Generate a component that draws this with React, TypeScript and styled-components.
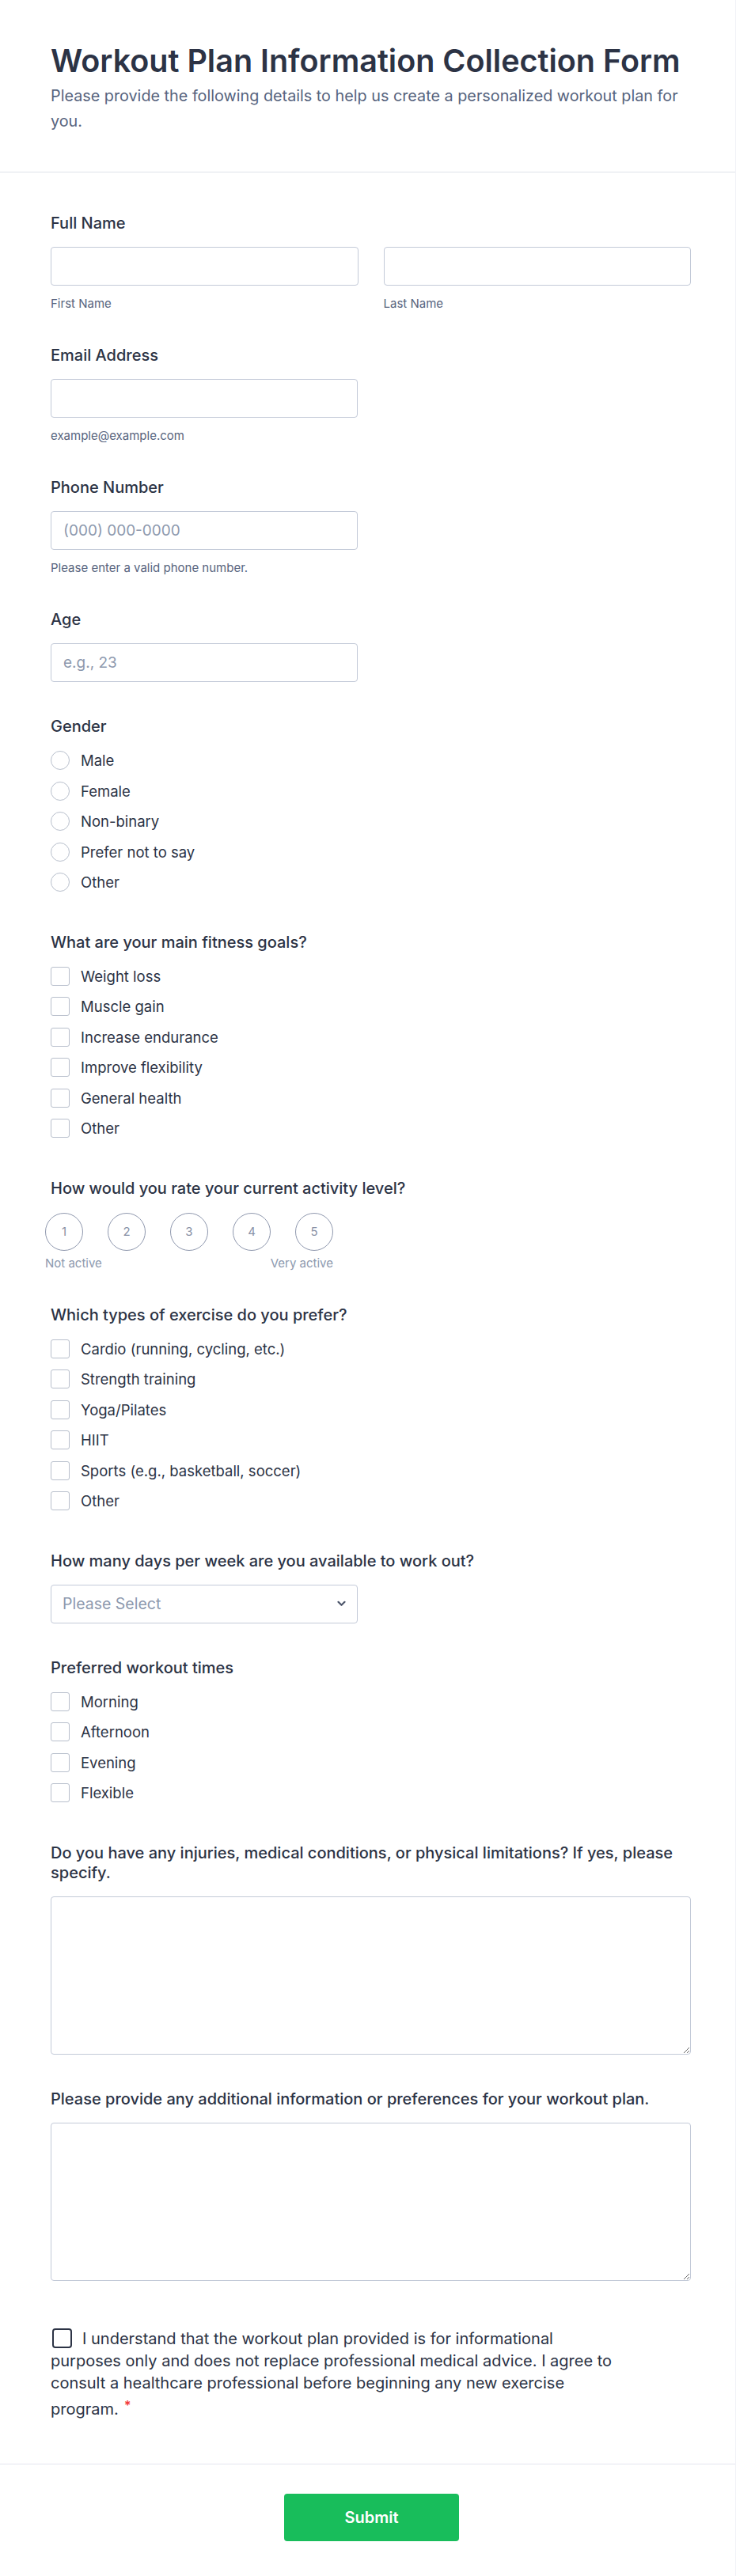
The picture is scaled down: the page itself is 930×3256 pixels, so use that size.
import React from "react";
import styled, { createGlobalStyle } from "styled-components";

const GlobalStyle = createGlobalStyle`
  * { box-sizing: border-box; }
  body {
    margin: 0;
    background: #ffffff;
    font-family: Inter, "Noto Sans", "Liberation Sans", sans-serif;
    color: #2c3345;
  }
`;

const Page = styled.div`
  width: 930px;
  background: #ffffff;
  border-right: 1px solid #f1f2f7;
`;

const Header = styled.header`
  padding: 53px 56px 48px 64px;
  border-bottom: 1px solid #dfe2ea;
`;

const Title = styled.h1`
  margin: 0;
  font-size: 39.5px;
  line-height: 48px;
  font-weight: 600;
  color: #2c3345;
`;

const Subtitle = styled.p`
  margin: 4px 0 0;
  font-size: 19.8px;
  line-height: 32px;
  color: #57647e;
`;

const Form = styled.form`
  display: flex;
  flex-direction: column;
  gap: 44px;
  padding: 52px 56px 55px 64px;
`;

const Field = styled.div`
  display: flex;
  flex-direction: column;
`;

const Label = styled.label`
  display: block;
  font-size: 20px;
  line-height: 25px;
  font-weight: 500;
  color: #2c3345;
  margin-bottom: 17px;
`;

const Row = styled.div`
  display: grid;
  grid-template-columns: 1fr 1fr;
  gap: 32px;
`;

const Column = styled.div`
  display: flex;
  flex-direction: column;
`;

const TextInput = styled.input<{ $narrow?: boolean }>`
  width: ${(p) => (p.$narrow ? "388px" : "100%")};
  height: 49px;
  padding: 0 15px;
  border: 1px solid #c3cad8;
  border-radius: 4px;
  font-family: inherit;
  font-size: 19px;
  color: #2c3345;
  background: #ffffff;
  outline: none;
  &::placeholder {
    color: #8d99ae;
  }
`;

const SubLabel = styled.span`
  margin-top: 14px;
  font-size: 15px;
  line-height: 18px;
  color: #57647e;
`;

const OptionList = styled.div`
  display: flex;
  flex-direction: column;
  margin-top: -6px;
`;

const Option = styled.label`
  display: flex;
  align-items: center;
  gap: 14px;
  height: 38.5px;
  font-size: 18.5px;
  color: #2c3345;
`;

const Radio = styled.input.attrs({ type: "radio" })`
  appearance: none;
  margin: 0;
  width: 24px;
  height: 24px;
  border: 1px solid #b8bfcc;
  border-radius: 50%;
  background: #ffffff;
  flex-shrink: 0;
`;

const Checkbox = styled.input.attrs({ type: "checkbox" })`
  appearance: none;
  margin: 0;
  width: 24px;
  height: 24px;
  border: 1px solid #b8bfcc;
  border-radius: 3px;
  background: #ffffff;
  flex-shrink: 0;
`;

const Scale = styled.div`
  display: flex;
  flex-direction: column;
  width: 364px;
  margin-left: -7px;
  margin-top: 1px;
`;

const ScaleRow = styled.div`
  display: flex;
  gap: 31px;
`;

const ScaleCircle = styled.span`
  display: flex;
  align-items: center;
  justify-content: center;
  width: 48px;
  height: 48px;
  border: 1px solid #8f98ae;
  border-radius: 50%;
  background: #ffffff;
  font-size: 15px;
  color: #8891a6;
`;

const ScaleLegend = styled.div`
  display: flex;
  justify-content: space-between;
  margin-top: 7px;
  font-size: 15px;
  line-height: 18px;
  color: #8d99ae;
`;

const SelectWrap = styled.div`
  position: relative;
  width: 388px;
`;

const Select = styled.select`
  appearance: none;
  width: 100%;
  height: 49px;
  padding: 0 40px 0 14px;
  border: 1px solid #c3cad8;
  border-radius: 4px;
  background: #ffffff;
  font-family: inherit;
  font-size: 19.5px;
  color: #8d99ae;
  outline: none;
`;

const Chevron = styled.svg`
  position: absolute;
  right: 15px;
  top: 20px;
  pointer-events: none;
`;

const TextArea = styled.textarea`
  width: 100%;
  height: 200px;
  padding: 12px 15px;
  border: 1px solid #c3cad8;
  border-radius: 4px;
  font-family: inherit;
  font-size: 19px;
  color: #2c3345;
  outline: none;
  resize: vertical;
`;

const Consent = styled.label`
  display: block;
  max-width: 712px;
  margin-top: 15px;
  font-size: 20px;
  line-height: 28px;
  color: #2c3345;
`;

const ConsentBox = styled.input.attrs({ type: "checkbox" })`
  appearance: none;
  display: inline-block;
  vertical-align: -5px;
  margin: 0 13px 0 2px;
  width: 25px;
  height: 25px;
  border: 2px solid #2c3345;
  border-radius: 4px;
  background: #ffffff;
`;

const Required = styled.span`
  color: #f23a3c;
  font-weight: 700;
  font-size: 16px;
  vertical-align: 6px;
  margin-left: 7px;
`;

const Footer = styled.footer`
  display: flex;
  justify-content: center;
  padding: 37px 0 49px 10px;
  border-top: 1px solid #e3e5ee;
`;

const SubmitButton = styled.button`
  width: 221px;
  height: 60px;
  border: none;
  border-radius: 4px;
  background: #18bd5b;
  color: #ffffff;
  font-family: inherit;
  font-size: 20px;
  font-weight: 600;
`;

const genders = ["Male", "Female", "Non-binary", "Prefer not to say", "Other"];
const goals = [
  "Weight loss",
  "Muscle gain",
  "Increase endurance",
  "Improve flexibility",
  "General health",
  "Other",
];
const exercises = [
  "Cardio (running, cycling, etc.)",
  "Strength training",
  "Yoga/Pilates",
  "HIIT",
  "Sports (e.g., basketball, soccer)",
  "Other",
];
const times = ["Morning", "Afternoon", "Evening", "Flexible"];

function CheckList({ items, name }: { items: string[]; name: string }) {
  return (
    <OptionList>
      {items.map((item) => (
        <Option key={item}>
          <Checkbox name={name} />
          {item}
        </Option>
      ))}
    </OptionList>
  );
}

export default function App() {
  return (
    <Page>
      <GlobalStyle />
      <Header>
        <Title>Workout Plan Information Collection Form</Title>
        <Subtitle>
          Please provide the following details to help us create a personalized workout plan for
          you.
        </Subtitle>
      </Header>
      <Form onSubmit={(e) => e.preventDefault()}>
        <Field>
          <Label>Full Name</Label>
          <Row>
            <Column>
              <TextInput />
              <SubLabel>First Name</SubLabel>
            </Column>
            <Column>
              <TextInput />
              <SubLabel>Last Name</SubLabel>
            </Column>
          </Row>
        </Field>

        <Field>
          <Label>Email Address</Label>
          <TextInput $narrow type="email" />
          <SubLabel>example@example.com</SubLabel>
        </Field>

        <Field>
          <Label>Phone Number</Label>
          <TextInput $narrow placeholder="(000) 000-0000" />
          <SubLabel>Please enter a valid phone number.</SubLabel>
        </Field>

        <Field>
          <Label>Age</Label>
          <TextInput $narrow placeholder="e.g., 23" />
        </Field>

        <Field>
          <Label>Gender</Label>
          <OptionList>
            {genders.map((g) => (
              <Option key={g}>
                <Radio name="gender" />
                {g}
              </Option>
            ))}
          </OptionList>
        </Field>

        <Field>
          <Label>What are your main fitness goals?</Label>
          <CheckList items={goals} name="goals" />
        </Field>

        <Field>
          <Label>How would you rate your current activity level?</Label>
          <Scale>
            <ScaleRow>
              {[1, 2, 3, 4, 5].map((n) => (
                <ScaleCircle key={n}>{n}</ScaleCircle>
              ))}
            </ScaleRow>
            <ScaleLegend>
              <span>Not active</span>
              <span>Very active</span>
            </ScaleLegend>
          </Scale>
        </Field>

        <Field>
          <Label>Which types of exercise do you prefer?</Label>
          <CheckList items={exercises} name="exercise" />
        </Field>

        <Field>
          <Label>How many days per week are you available to work out?</Label>
          <SelectWrap>
            <Select defaultValue="">
              <option value="">Please Select</option>
              {[1, 2, 3, 4, 5, 6, 7].map((d) => (
                <option key={d}>{d}</option>
              ))}
            </Select>
            <Chevron width="11" height="8" viewBox="0 0 11 8" fill="none">
              <path
                d="M1.5 1.8 L5.5 5.8 L9.5 1.8"
                stroke="#4d566b"
                strokeWidth="2.2"
                strokeLinecap="round"
                strokeLinejoin="round"
              />
            </Chevron>
          </SelectWrap>
        </Field>

        <Field>
          <Label>Preferred workout times</Label>
          <CheckList items={times} name="times" />
        </Field>

        <Field>
          <Label>
            Do you have any injuries, medical conditions, or physical limitations? If yes, please
            specify.
          </Label>
          <TextArea />
        </Field>

        <Field>
          <Label>Please provide any additional information or preferences for your workout plan.</Label>
          <TextArea />
        </Field>

        <Consent>
          <ConsentBox />
          I understand that the workout plan provided is for informational purposes only and does
          not replace professional medical advice. I agree to consult a healthcare professional
          before beginning any new exercise program.
          <Required>*</Required>
        </Consent>
      </Form>
      <Footer>
        <SubmitButton type="submit">Submit</SubmitButton>
      </Footer>
    </Page>
  );
}
